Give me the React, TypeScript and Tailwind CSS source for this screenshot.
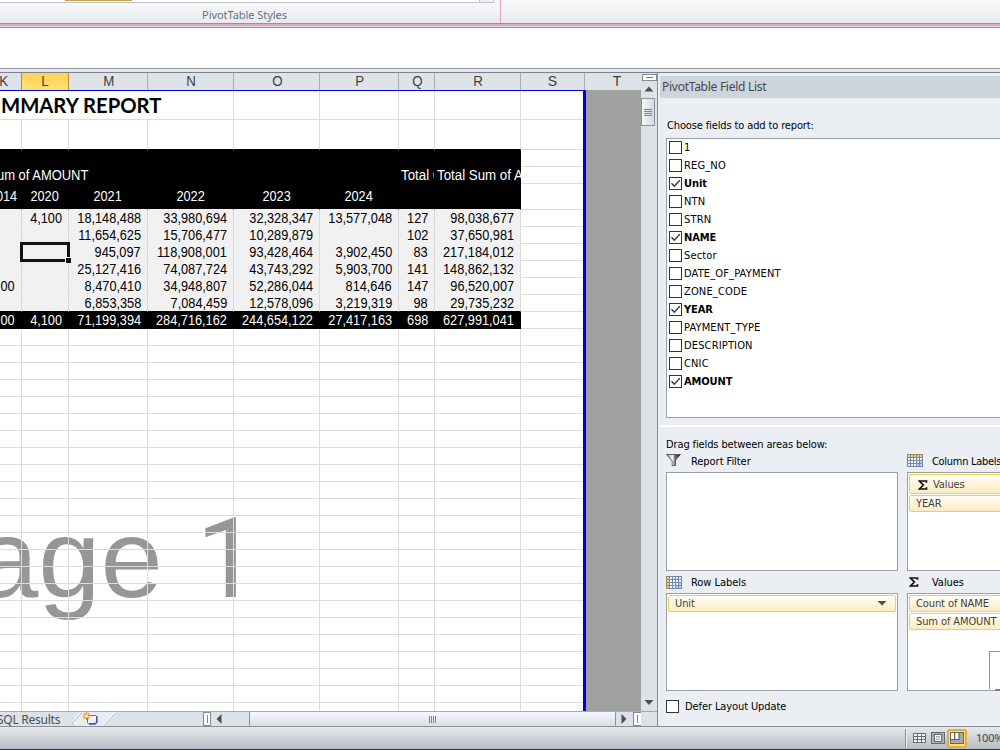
import type { ReactNode } from "react";
import { clsx } from "clsx";

type Column = { id: string; width: string };

const columns: Column[] = [
  { id: "K", width: "w-[22px]" },
  { id: "L", width: "w-[47px]" },
  { id: "M", width: "w-[79px]" },
  { id: "N", width: "w-[86px]" },
  { id: "O", width: "w-[86px]" },
  { id: "P", width: "w-[79px]" },
  { id: "Q", width: "w-[36px]" },
  { id: "R", width: "w-[86px]" },
];

const years = ["2014", "2020", "2021", "2022", "2023", "2024", "", ""];

const dataRows = [
  ["", "4,100", "18,148,488", "33,980,694", "32,328,347", "13,577,048", "127", "98,038,677"],
  ["", "", "11,654,625", "15,706,477", "10,289,879", "", "102", "37,650,981"],
  ["", "", "945,097", "118,908,001", "93,428,464", "3,902,450", "83", "217,184,012"],
  ["", "", "25,127,416", "74,087,724", "43,743,292", "5,903,700", "141", "148,862,132"],
  ["00", "", "8,470,410", "34,948,807", "52,286,044", "814,646", "147", "96,520,007"],
  ["", "", "6,853,358", "7,084,459", "12,578,096", "3,219,319", "98", "29,735,232"],
];

const totals = ["00", "4,100", "71,199,394", "284,716,162", "244,654,122", "27,417,163", "698", "627,991,041"];

const fields = [
  { label: "1", checked: false },
  { label: "REG_NO", checked: false },
  { label: "Unit", checked: true },
  { label: "NTN", checked: false },
  { label: "STRN", checked: false },
  { label: "NAME", checked: true },
  { label: "Sector", checked: false },
  { label: "DATE_OF_PAYMENT", checked: false },
  { label: "ZONE_CODE", checked: false },
  { label: "YEAR", checked: true },
  { label: "PAYMENT_TYPE", checked: false },
  { label: "DESCRIPTION", checked: false },
  { label: "CNIC", checked: false },
  { label: "AMOUNT", checked: true },
];

function Ribbon() {
  return (
    <div className="flex h-[28px] shrink-0 flex-col">
      <div className="flex h-[23px] bg-linear-to-b from-[#f8f9fa] to-[#e8ebee]">
        <div className="flex w-[501px] flex-col border-r border-[#dc9fc0]">
          <div className="flex h-[3px] w-[494px] border-r border-b border-[#bfc3c9] bg-white">
            <div className="ml-[65px] h-px w-[67px] bg-[#c9a24a]" />
            <div className="ml-auto w-[14px] border-l border-[#bfc3c9] bg-[#eef0f3]" />
          </div>
          <div className="w-[489px] pt-[4px] text-center text-[11px] leading-[16px] tracking-[-0.05px] text-[#687180]">
            PivotTable Styles
          </div>
        </div>
      </div>
      <div className="h-px bg-[#a58aa5]" />
      <div className="h-[2px] bg-[#dfa7c6]" />
      <div className="h-px bg-[#e0dde6]" />
      <div className="h-px bg-[#93969b]" />
    </div>
  );
}

function ColumnHeaders() {
  return (
    <div className="flex h-[17px] shrink-0 bg-[#dfe3e8] text-[14px] leading-[17px] text-[#3c4045]">
      {columns.map((column) => (
        <div
          key={column.id}
          className={clsx(
            "flex shrink-0 justify-center border-r",
            column.width,
            column.id === "L"
              ? "border-[#c08a35] bg-linear-to-b from-[#ffd257] to-[#ffe36f]"
              : column.id === "K"
                ? "border-[#c08a35] pr-[14px]"
                : "border-[#a9aeb5] pl-px",
          )}
        >
          <span className="origin-center scale-x-95">{column.id}</span>
        </div>
      ))}
      <div className="w-[64px] border-r border-[#a9aeb5] text-center">S</div>
      <div className="flex-1 pl-[8px] text-center">T</div>
    </div>
  );
}

function BlankCell() {
  return <div className="w-[62px] shrink-0 border-b border-[#dcdcdc]" />;
}

function BlankRow({ height, black = false }: { height: string; black?: boolean }) {
  return (
    <div className={clsx("flex shrink-0", height)}>
      {columns.map((column) => (
        <div
          key={column.id}
          className={clsx(
            "shrink-0 border-r border-b border-r-[#dcdcdc]",
            black ? "border-b-black" : "border-b-[#dcdcdc]",
            column.width,
          )}
        />
      ))}
      <BlankCell />
    </div>
  );
}

type ValueRowProps = { values: string[]; height?: string; tone: "data" | "last" | "total" | "year" };

function ValueRow({ values, height = "h-[17px]", tone }: ValueRowProps) {
  const dark = tone === "total" || tone === "year";
  return (
    <div className={clsx("flex shrink-0", height)}>
      {columns.map((column, i) => (
        <div
          key={column.id}
          className={clsx(
            "flex shrink-0 items-center overflow-hidden border-r border-b whitespace-nowrap",
            column.width,
            dark ? "border-r-black bg-black text-white" : "border-r-[#d9d9d9] bg-[#f1f1f1] text-black",
            tone === "data" && "border-b-[#f1f1f1]",
            tone === "year" && "border-b-[#f1f1f1] pb-[2px]",
            (tone === "last" || tone === "total") && "border-b-black",
            tone === "year" && i > 0 ? "justify-center" : "justify-end",
            tone === "year" ? (i > 0 ? "" : "pr-[4px]") : "pr-[6px]",
          )}
        >
          <span className={clsx("scale-x-[0.91]", tone === "year" && i > 0 ? "origin-center" : "origin-right")}>
            {values[i]}
          </span>
        </div>
      ))}
      <BlankCell />
    </div>
  );
}

function Sheet() {
  return (
    <div className="flex h-[621px] shrink-0">
      <div className="relative isolate flex w-[586px] flex-col overflow-hidden border-t border-r-3 border-[#0000d8] bg-white text-[14px] leading-[16px]">
        {/* page watermark sits under the gridlines */}
        <div className="absolute top-[404px] left-[-24px] -z-10 flex items-baseline text-[112px] leading-[128px] whitespace-nowrap text-[#969696]">
          <span>age</span>
          <span className="ml-[33px] font-[Roboto]">1</span>
        </div>

        <div className="flex h-[29px] shrink-0">
          <div className="flex w-[234px] items-center border-r border-b border-[#dcdcdc] font-['Lato','Liberation_Sans',sans-serif] text-[21px] font-bold whitespace-nowrap text-black">
            <span className="ml-px origin-left scale-x-[0.965]">MMARY REPORT</span>
          </div>
          {columns.slice(4).map((column) => (
            <div key={column.id} className={clsx("shrink-0 border-r border-b border-[#dcdcdc]", column.width)} />
          ))}
          <BlankCell />
        </div>
        <BlankRow height="h-[30px]" black />

        <div className="flex h-[17px] shrink-0">
          <div className="w-[521px] bg-black" />
          <BlankCell />
        </div>
        <div className="flex h-[17px] shrink-0 text-white">
          <div className="flex w-[399px] bg-black whitespace-nowrap">
            <span className="-ml-[3px] origin-left scale-x-[0.925]">um of AMOUNT</span>
          </div>
          <div className="flex w-[35px] overflow-hidden bg-black pl-[2px] whitespace-nowrap">
            <span className="origin-left scale-x-[0.95]">Total C</span>
          </div>
          <div className="flex w-[87px] overflow-hidden bg-black pl-[3px] whitespace-nowrap">
            <span className="origin-left scale-x-[0.95]">Total Sum of A</span>
          </div>
          <BlankCell />
        </div>
        <ValueRow values={years} height="h-[26px]" tone="year" />
        {dataRows.map((values, i) => (
          <ValueRow key={i} values={values} tone={i === dataRows.length - 1 ? "last" : "data"} />
        ))}
        <ValueRow values={totals} tone="total" />
        {Array.from({ length: 23 }, (_, i) => (
          <BlankRow key={i} height="h-[17px]" />
        ))}

        {/* active cell outline with its fill handle */}
        <div className="absolute top-[151px] left-[20px] h-[20px] w-[50px] border-3 border-[#111]">
          <div className="absolute -right-[4px] -bottom-[4px] size-[6px] border-t border-l border-white bg-[#111]" />
        </div>
      </div>
      <div className="flex-1 bg-[#a0a0a0]" />
    </div>
  );
}

function Arrow({ points, className = "" }: { points: string; className?: string }) {
  return (
    <svg viewBox="0 0 10 10" className={clsx("size-[10px] shrink-0", className)}>
      <polygon points={points} fill="#4b4f55" />
    </svg>
  );
}

function VerticalScrollbar() {
  return (
    <div className="flex w-[16px] shrink-0 flex-col items-center bg-[#dde1e8]">
      <div className="mt-px flex h-[7px] w-[15px] shrink-0 items-center justify-center border border-[#858a91] bg-white">
        <div className="h-px w-[7px] bg-[#777]" />
      </div>
      <Arrow points="0.500,7.500 5,2.500 9.500,7.500" className="mt-[3px] mr-px" />
      <div className="mt-[4px] mr-[2px] flex h-[28px] w-[14px] shrink-0 flex-col items-center justify-center gap-px border border-[#8b9099] bg-linear-to-r from-[#f7f8fa] to-[#d5dae1]">
        <div className="h-px w-[8px] bg-[#7c8289]" />
        <div className="h-px w-[8px] bg-[#7c8289]" />
        <div className="h-px w-[8px] bg-[#7c8289]" />
        <div className="h-px w-[8px] bg-[#7c8289]" />
      </div>
      <Arrow points="0.500,3 9.500,3 5,8" className="mt-auto mr-px mb-[4px]" />
    </div>
  );
}

function TabStrip() {
  return (
    <div className="flex h-[16px] shrink-0 border-t border-b border-[#a4aab2] border-b-[#8a9099] bg-[#dde1e8]">
      <div className="flex w-[203px] shrink-0">
        <span className="-ml-[3px] w-[72px] text-[12px] leading-[16px] tracking-[-0.25px] whitespace-nowrap text-[#4b5055]">
          SQL Results
        </span>
        <svg viewBox="0 0 50 14" className="h-[14px] w-[50px]">
          <path d="M1 14 L13 0 H47 L35 14 Z" fill="#e9ecf0" />
          <path d="M1 14 L13 0 M5 14 L3.5 11 M35 14 L47 0" fill="none" stroke="#fff" strokeWidth="2.4" />
          <path d="M1.5 13.5 L13 0.5 M3 11 L5 14 M35 14 L47 0.5" fill="none" stroke="#9a9fa8" strokeWidth="0.9" />
          <rect x="18.500" y="3.500" width="9" height="8" rx="1" fill="#eaf1fb" stroke="#5570a5" strokeWidth="1" />
          <path d="M20 12h6l2-2V4" fill="none" stroke="#3c588f" strokeWidth="1.3" />
          <path d="M17.500 0v8M13.500 4h8M14.700 1.200l5.600 5.600M20.300 1.200l-5.600 5.600" stroke="#e8932a" strokeWidth="1.2" />
          <circle cx="17.500" cy="4" r="1.500" fill="#fff6d6" />
        </svg>
      </div>
      <div className="flex w-[8px] items-center justify-center border border-[#858a91] bg-white">
        <div className="h-[8px] w-px bg-[#888]" />
      </div>
      <Arrow points="7.500,0 7.500,10 2.500,5" className="mt-[2px] ml-[3px]" />
      <div className="ml-[25px] flex w-[367px] items-center justify-center gap-px rounded-[1px] border-r border-l border-[#8b9099] bg-linear-to-b from-[#f6f8fa] to-[#d9dee5]">
        <div className="h-[7px] w-px bg-[#7c8289]" />
        <div className="h-[7px] w-px bg-[#7c8289]" />
        <div className="h-[7px] w-px bg-[#7c8289]" />
        <div className="h-[7px] w-px bg-[#7c8289]" />
      </div>
      <Arrow points="2.500,0 2.500,10 7.500,5" className="mt-[2px] ml-[3px]" />
      <div className="ml-[4px] flex w-[8px] items-center justify-center border border-r-0 border-[#858a91] bg-white">
        <div className="h-[8px] w-px bg-[#888]" />
      </div>
    </div>
  );
}

function Checkbox({ checked = false }: { checked?: boolean }) {
  return (
    <div className="-mt-px size-[13px] shrink-0 border border-[#333] bg-white">
      {checked && (
        <svg viewBox="0 0 11 11" className="size-[11px]">
          <path d="M1.500 5.200 L4.300 8.200 L9.800 2.200" fill="none" stroke="#333" strokeWidth="1.300" />
        </svg>
      )}
    </div>
  );
}

function TableIcon({ rows = false }: { rows?: boolean }) {
  return (
    <svg viewBox="0 0 16 13" className="h-[13px] w-[16px]">
      <rect width="16" height="13" fill="#7189ae" />
      {[0, 1, 2, 3, 4].map((x) =>
        [0, 1, 2, 3].map((y) => (
          <rect
            key={`${x}-${y}`}
            x={1 + x * 3}
            y={1 + y * 3}
            width="2"
            height="2"
            fill={(rows ? x === 0 : y === 0) ? "#f0cf83" : x + y > 5 ? "#bcd0ee" : "#f2f6fc"}
          />
        )),
      )}
      <path d={rows ? "M0.500 0v13M3.500 0v13" : "M0 0.500h16M0 3.500h16"} stroke="#9a875e" />
    </svg>
  );
}

function FilterIcon() {
  return (
    <svg viewBox="0 0 15 12" className="h-[12px] w-[15px]">
      <defs>
        <linearGradient id="funnel" x1="0" x2="1" y1="0" y2="0">
          <stop offset="0" stopColor="#777" />
          <stop offset="0.420" stopColor="#fafafa" />
          <stop offset="0.620" stopColor="#666" />
          <stop offset="1" stopColor="#222" />
        </linearGradient>
      </defs>
      <path d="M0.500 0.500h14L9.500 6v5.500H6.200V7Z" fill="url(#funnel)" stroke="#444" strokeWidth="0.800" />
    </svg>
  );
}

function SigmaIcon() {
  return (
    <svg viewBox="0 0 10 10" className="size-[10px]">
      <path d="M8.500 2.800V1H1.500L5.300 5 1.500 9H8.500V7.200" fill="none" stroke="#111" strokeWidth="1.700" />
    </svg>
  );
}

function Pill({ children, className }: { children: ReactNode; className?: string }) {
  return (
    <div
      className={clsx(
        "flex shrink-0 items-center rounded-[2px] border border-[#efcf52] bg-linear-to-b from-[#fffdf6] to-[#fdebc0] pt-px pl-[6px] tracking-[-0.1px] whitespace-nowrap text-[#3f3f3f]",
        className,
      )}
    >
      {children}
    </div>
  );
}

function AreaLabel({ icon, children, className }: { icon: ReactNode; children: ReactNode; className: string }) {
  return (
    <div className={clsx("flex tracking-[-0.05px] whitespace-nowrap", className)}>
      <div className="flex w-[25px] shrink-0">{icon}</div>
      <span className="pt-px">{children}</span>
    </div>
  );
}

function FieldListPane() {
  return (
    <div className="flex h-[654px] w-[343px] shrink-0 flex-col overflow-hidden border-b border-l border-[#858b95] bg-[#ebeff4] font-['DejaVu_Sans_Condensed','DejaVu_Sans',sans-serif] text-[11px] leading-[14px] text-black">
      <div className="mt-[3px] ml-[2px] flex h-[22px] shrink-0 items-center bg-[#cdd4dc] pl-[2px] font-['Noto_Sans',sans-serif] text-[12px] tracking-[-0.27px] text-[#44484e]">
        PivotTable Field List
      </div>
      <div className="mt-[21px] ml-[9px] tracking-[-0.13px]">Choose fields to add to report:</div>

      <div className="mt-[5px] ml-[8px] h-[280px] w-[350px] shrink-0 border border-[#9a9fa6] bg-white">
        {fields.map((field) => (
          <div key={field.label} className="flex h-[18px] items-center pl-[2px]">
            <Checkbox checked={field.checked} />
            <span className={clsx("pl-[2px]", field.checked ? "font-bold tracking-[-0.1px]" : "tracking-[0.15px]")}>
              {field.label}
            </span>
          </div>
        ))}
      </div>

      <div className="mt-[7px] ml-[3px] h-[2px] shrink-0 bg-white" />
      <div className="mt-[11px] ml-[8px] h-[14px] shrink-0 tracking-[-0.12px]">Drag fields between areas below:</div>

      <div className="mt-[2px] ml-[8px] flex w-[350px] shrink-0 gap-[9px]">
        <div className="w-[232px] shrink-0">
          <AreaLabel icon={<FilterIcon />} className="h-[18px] items-start">Report Filter</AreaLabel>
          <div className="h-[99px] border border-[#9a9fa6] bg-white" />
          <AreaLabel icon={<TableIcon rows />} className="h-[22px] items-center">Row Labels</AreaLabel>
          <div className="h-[98px] border border-[#9a9fa6] bg-white p-px">
            <Pill className="h-[17px] justify-between pr-[8px]">
              Unit
              <Arrow points="0.500,2 9.500,2 5,6.500" />
            </Pill>
          </div>
        </div>

        <div className="w-[110px] shrink-0">
          <AreaLabel icon={<TableIcon />} className="h-[18px] items-start">
            <span className="tracking-[-0.3px]">Column Labels</span>
          </AreaLabel>
          <div className="flex h-[99px] flex-col gap-px border border-[#9a9fa6] bg-white p-px">
            <Pill className="h-[20px]">
              <span className="mr-[5px] ml-[2px]"><SigmaIcon /></span>
              Values
            </Pill>
            <Pill className="h-[17px]">YEAR</Pill>
          </div>
          <AreaLabel icon={<span className="pl-[2px]"><SigmaIcon /></span>} className="h-[22px] items-center">
            Values
          </AreaLabel>
          <div className="relative flex h-[98px] flex-col gap-px border border-[#9a9fa6] bg-white p-px">
            <Pill className="h-[17px]">Count of NAME</Pill>
            <Pill className="h-[17px]">Sum of AMOUNT</Pill>
            <div className="absolute top-[57px] left-[81px] h-[38px] w-[30px] border-t border-l border-[#8f9398] bg-white" />
            <div className="absolute top-[95px] left-[87px] h-[2px] w-[24px] rounded-l-full bg-[#777b80]" />
          </div>
        </div>
      </div>

      <div className="mt-[8px] ml-[8px] flex items-center gap-[6px] tracking-[-0.1px]">
        <Checkbox />
        <span className="pt-px">Defer Layout Update</span>
      </div>
    </div>
  );
}

function StatusBar() {
  return (
    <div className="flex h-[23px] shrink-0 items-center border-b border-[#263746] bg-linear-to-b from-[#e6e8ea] to-[#b8bdc3] text-[11px] text-[#3f444b]">
      <div className="ml-[905px] h-[18px] w-[2px] shrink-0 border-l border-[#8e949c] bg-[#eef0f2]" />
      <svg viewBox="0 0 13 10" className="ml-[6px] h-[10px] w-[13px] shrink-0">
        <rect x="0.500" y="0.500" width="12" height="9" fill="#f4f5f6" stroke="#686d73" />
        <path d="M0 3.500h13M0 6.500h13M4.500 0v10M8.500 0v10" stroke="#686d73" />
      </svg>
      <svg viewBox="0 0 14 12" className="ml-[5px] h-[12px] w-[14px] shrink-0">
        <rect x="0.500" y="0.500" width="13" height="11" fill="#a9adb2" stroke="#686d73" />
        <rect x="3.500" y="2.500" width="7" height="7" fill="#fff" stroke="#686d73" />
        <path d="M5 4.500h4M5 6h4M5 7.500h4" stroke="#888d92" strokeWidth="0.700" />
      </svg>
      <div className="ml-[2px] flex h-[19px] w-[20px] shrink-0 items-center justify-center rounded-[2px] border-2 border-[#dfae3c] bg-[#ffe06c]">
        <svg viewBox="0 0 14 12" className="h-[12px] w-[14px] shrink-0">
          <rect x="0.500" y="0.500" width="13" height="11" fill="#a9a9a9" stroke="#6b6655" />
          <path d="M1 1h3.500v6H1zM5.500 1h3v6h-3z" fill="#fff" />
          <path d="M4.700 1v7M9 1v7M1 7.500h8" stroke="#555" strokeWidth="0.900" />
        </svg>
      </div>
      <span className="ml-[9px] shrink-0 tracking-[-0.2px]">100%</span>
    </div>
  );
}

export default function App() {
  return (
    <div className="flex h-[750px] w-[1000px] flex-col overflow-hidden bg-[#dde1e8] font-['Noto_Sans','Liberation_Sans',sans-serif]">
      <Ribbon />
      <div className="h-[41px] shrink-0 border-b border-[#93969b] bg-white" />
      <div className="h-[4px] shrink-0 border-b border-[#7d8289] bg-[#e3e7f0]" />
      <div className="flex h-[654px] shrink-0">
        <div className="flex w-[657px] flex-col">
          <div className="flex h-[638px] shrink-0">
            <div className="flex w-[641px] flex-col font-['Liberation_Sans',Arial,sans-serif]">
              <ColumnHeaders />
              <Sheet />
            </div>
            <VerticalScrollbar />
          </div>
          <TabStrip />
        </div>
        <FieldListPane />
      </div>
      <StatusBar />
    </div>
  );
}
